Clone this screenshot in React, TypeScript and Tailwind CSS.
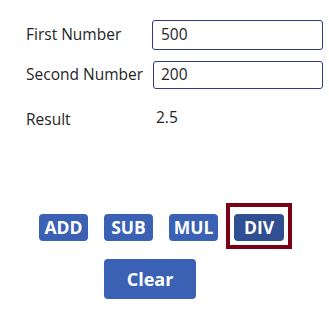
import React from 'react';

const font = { fontFamily: '"Open Sans", "Noto Sans", sans-serif' };

export default function App() {
  return (
    <div className="w-[329px] h-[317px] bg-white text-[#252525]" style={font}>
      <div className="pt-[20px] pl-[26px] pr-[6px]">
        <div className="flex items-center h-[30px]">
          <div className="w-[126px] text-[15.5px]">First Number</div>
          <div className="w-[171px] h-[30px] border border-[#2d3a83] rounded-[3px] flex items-center pl-[8px] text-[15.5px]">500</div>
        </div>
        <div className="flex items-center h-[28px] mt-[11px]">
          <div className="w-[127px] text-[15.5px] whitespace-nowrap">Second Number</div>
          <div className="w-[170px] h-[28px] border border-[#2d3a83] rounded-[3px] flex items-center pl-[7px] text-[15.5px]">200</div>
        </div>
        <div className="flex items-center h-[24px] mt-[19px]">
          <div className="w-[130px] text-[15.5px]">Result</div>
          <div className="text-[15.5px] -translate-y-[2px]">2.5</div>
        </div>
      </div>

      <div className="flex items-center gap-[16px] pl-[39px] mt-[82px]">
        <button className="w-[49px] h-[27px] rounded-[4px] bg-[#3a61b4] text-white font-bold text-[17.5px] leading-none">ADD</button>
        <button className="w-[49px] h-[27px] rounded-[4px] bg-[#3a61b4] text-white font-bold text-[17.5px] leading-none">SUB</button>
        <button className="w-[49px] h-[27px] rounded-[4px] bg-[#3a61b4] text-white font-bold text-[17.5px] leading-none">MUL</button>
        <span className="relative">
          <button className="w-[50px] h-[27px] rounded-[4px] bg-[#2f4f92] text-white font-bold text-[17.5px] leading-none">DIV</button>
          <span className="absolute left-[-8px] right-[-8px] top-[-11px] bottom-[-8px] border-4 border-[#7a0016] pointer-events-none" />
        </span>
      </div>

      <div className="pl-[104px] mt-[18px]">
        <button className="w-[92px] h-[40px] rounded-[4px] bg-[#3a61b4] text-white font-bold text-[18px] leading-none">Clear</button>
      </div>
    </div>
  );
}
